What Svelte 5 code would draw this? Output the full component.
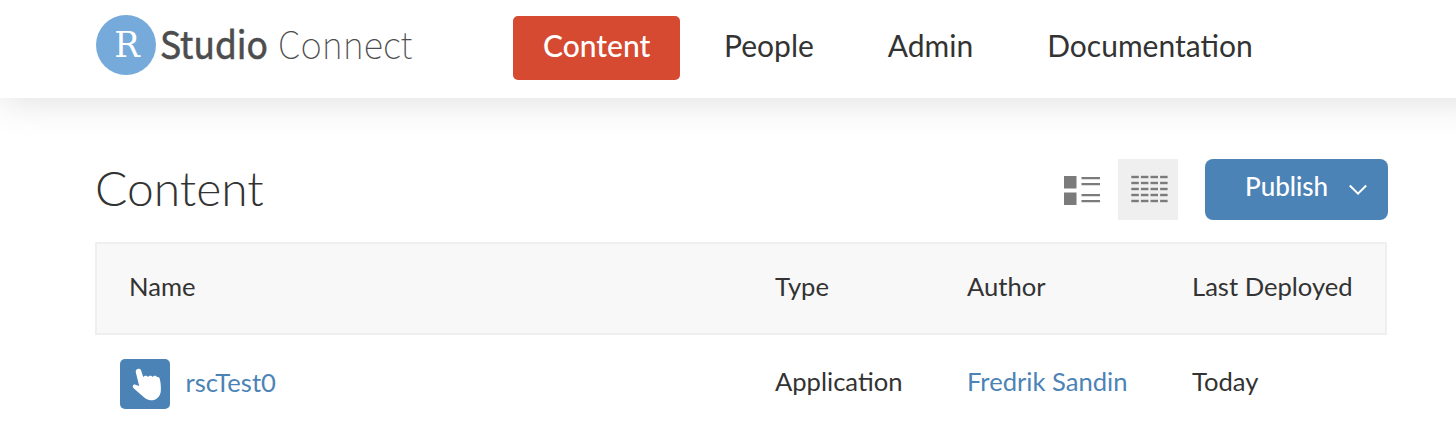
<script>
  const links = ['People', 'Admin', 'Documentation'];
  const cols = [0, 1, 2, 3];
  const rows = [0, 1, 2, 3, 4];
</script>

<div class="page">
  <header>
    <svg class="logo" width="330" height="98" viewBox="0 0 330 98" role="img" aria-label="RStudio Connect">
      <circle cx="30" cy="45" r="30" fill="#75aadb" />
      <text class="r" x="18.3" y="57" textLength="25.5" lengthAdjust="spacingAndGlyphs">R</text>
      <text class="studio" x="64" y="58.5" textLength="108" lengthAdjust="spacingAndGlyphs">Studio</text>
      <text class="connect" x="182" y="58.5" textLength="134.5" lengthAdjust="spacingAndGlyphs">Connect</text>
    </svg>
    <nav>
      <a class="active" href="#content">Content</a>
      {#each links as link}
        <a href="#{link}">{link}</a>
      {/each}
    </nav>
  </header>

  <main>
    <div class="bar">
      <h1>Content</h1>
      <div class="view">
        <svg width="60" height="61" viewBox="0 0 60 61" fill="#7b7b7b">
          <path d="M6 17h12.5v12.5H6zM6 33.5h12.5v12.5H6z" />
          <path d="M23.5 18H42v2.2H23.5zM23.5 24H42v2.2H23.5zM23.5 35H42v2.2H23.5zM23.5 41H42v2.2H23.5z" />
        </svg>
      </div>
      <div class="view selected">
        <svg width="60" height="61" viewBox="0 0 60 61" fill="#7b7b7b">
          {#each rows as r}
            {#each cols as c}
              <rect x={13.3 + c * 9.6} y={16.8 + r * 6} width="7.5" height="2.4" />
            {/each}
          {/each}
        </svg>
      </div>
      <button>
        <span>Publish</span>
        <svg width="20" height="14" viewBox="0 0 20 14"><path d="M1.8 2.5 10 10.7 18.2 2.5" fill="none" stroke="#fff" stroke-width="2" /></svg>
      </button>
    </div>

    <div class="row head">
      <span>Name</span><span>Type</span><span>Author</span><span>Last Deployed</span>
    </div>
    <div class="row item">
      <span class="name">
        <svg width="50" height="50" viewBox="0 0 50 50">
          <rect width="50" height="50" rx="5" fill="#4c83b6" />
          <path fill="#fff" d="M15.8 13.2C15 9.4 20.2 8.4 21.2 11.7L23.3 18.2C24.2 16.4 27 16.3 28 18.1C29.2 16.4 31.6 16.4 32.5 18C33.7 16.2 36.2 16.2 37 18.1C38.4 17.5 39.4 18.3 39.7 19.7C40.7 23.5 41 27 40.9 31.2C40.7 34.5 39.8 36.6 37.7 38.7C35.6 40.7 33 41.4 30.3 41.2C27.4 41 25.2 39.6 22.8 37.3L13.6 29.2C11.8 27.5 13.2 25 15.5 25.7L19.2 27Z" />
        </svg>
        <a href="#rscTest0">rscTest0</a>
      </span>
      <span>Application</span>
      <span><a href="#author">Fredrik Sandin</a></span>
      <span>Today</span>
    </div>
  </main>
</div>

<style>
  .page {
    height: 430px;
    overflow: hidden;
    background: #fff;
    color: #333;
    font-family: Lato, sans-serif;
    font-size: 25.6px;
  }
  a { color: inherit; text-decoration: none; }
  svg { display: block; flex: none; }
  header {
    display: flex;
    height: 98px;
    box-sizing: border-box;
    margin-right: -40px;
    padding-left: 96px;
    background: #fff;
    box-shadow: 0 0 40px rgba(0, 0, 0, 0.15);
  }
  .r { font: 200 36px "DejaVu Serif", serif; fill: #fff; }
  .studio { font: 400 38px "Noto Sans CJK SC", sans-serif; fill: #4d4d4d; stroke: #4d4d4d; stroke-width: 0.6; }
  .connect { font: 100 38px "Noto Sans CJK SC", sans-serif; fill: #4d4d4d; }
  nav {
    display: flex;
    gap: 14px;
    padding: 16px 0 0 87px;
    font-size: 30px;
    line-height: 59px;
  }
  nav a { height: 64px; padding: 0 30px; white-space: nowrap; }
  nav .active {
    width: 107px;
    border-radius: 5px;
    background: #d64a31;
    color: #fff;
    font-weight: 500;
  }
  main { padding: 61px 69px 0 95px; }
  .bar { display: flex; height: 61px; margin-bottom: 22px; }
  h1 {
    flex: 1;
    margin: 0;
    font-size: 48px;
    font-weight: 300;
    line-height: 58px;
  }
  .view { width: 60px; height: 61px; }
  .selected { background: #efefef; }
  button {
    display: flex;
    align-items: center;
    width: 183px;
    height: 61px;
    margin: 0 -1px 0 27px;
    padding: 0 0 0 40px;
    border: 0;
    border-radius: 8px;
    background: #4c83b6;
    color: #fff;
    font: 500 26px/54px Lato, sans-serif;
  }
  button span { width: 103px; height: 61px; text-align: left; }
  .row {
    display: grid;
    grid-template-columns: 646px 192px 225px 1fr;
    white-space: nowrap;
  }
  .head {
    height: 93px;
    box-sizing: border-box;
    padding-left: 32px;
    border: 2px solid #efefef;
    background: #f8f8f8;
    line-height: 84px;
  }
  .item { padding: 24px 0 0 34px; line-height: 44px; }
  .item a { color: #4c83b6; }
  .name { display: flex; gap: 15.5px; margin-left: -9px; }
  .name a { line-height: 46px; }
</style>
